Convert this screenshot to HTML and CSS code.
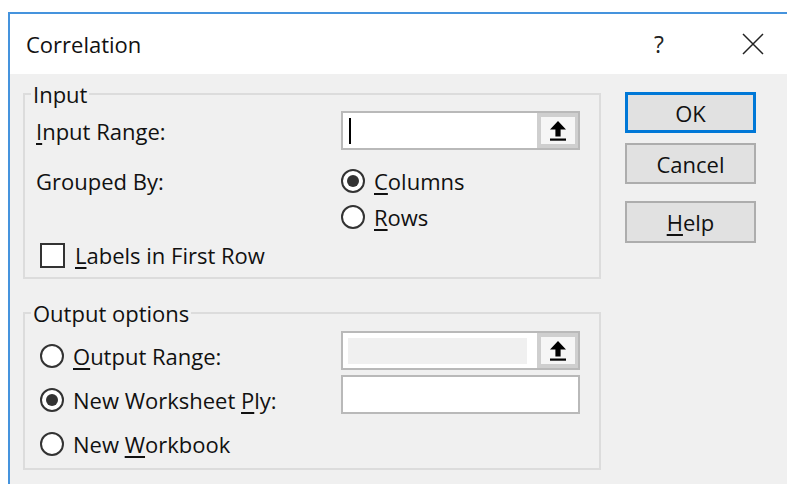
FILE: index.html
```html
<!DOCTYPE html>
<html lang="en">
<head>
<meta charset="utf-8">
<title>Correlation</title>
<link rel="stylesheet" href="styles.css">
</head>
<body>
<div class="window">
  <div class="titlebar">
    <span class="title">Correlation</span>
    <span class="caption-btn help-btn">?</span>
    <span class="caption-btn close-btn">
      <svg width="22" height="22" viewBox="0 0 22 22" aria-hidden="true">
        <path d="M1 1 L21 21 M21 1 L1 21" stroke="#222" stroke-width="1.5" fill="none"/>
      </svg>
    </span>
  </div>

  <div class="dialog-body">
    <div class="groups">
      <div class="group group-input">
        <span class="group-title">Input</span>

        <div class="row row-field">
          <span class="field-label"><u>I</u>nput Range:</span>
          <div class="range-box">
            <div class="range-text"><span class="caret"></span></div>
            <span class="range-btn">
              <svg width="18" height="22" viewBox="0 0 18 22" aria-hidden="true">
                <path d="M9 1 L17 9.5 L11.6 9.5 L11.6 16.5 L6.4 16.5 L6.4 9.5 L1 9.5 Z" fill="#000"/>
                <rect x="1" y="18.5" width="16" height="2.2" fill="#000"/>
              </svg>
            </span>
          </div>
        </div>

        <div class="row row-option first-option">
          <span class="field-label">Grouped By:</span>
          <label class="radio checked"><span class="circle"></span><span><u>C</u>olumns</span></label>
        </div>

        <div class="row row-option second-option">
          <span class="field-label"></span>
          <label class="radio"><span class="circle"></span><span><u>R</u>ows</span></label>
        </div>

        <div class="row row-option check-option">
          <label class="check"><span class="box"></span><span><u>L</u>abels in First Row</span></label>
        </div>
      </div>

      <div class="group group-output">
        <span class="group-title">Output options</span>

        <div class="row out-row">
          <label class="radio out-radio"><span class="circle"></span><span><u>O</u>utput Range:</span></label>
          <div class="range-box">
            <div class="range-text disabled"><span class="disabled-fill"></span></div>
            <span class="range-btn">
              <svg width="18" height="22" viewBox="0 0 18 22" aria-hidden="true">
                <path d="M9 1 L17 9.5 L11.6 9.5 L11.6 16.5 L6.4 16.5 L6.4 9.5 L1 9.5 Z" fill="#000"/>
                <rect x="1" y="18.5" width="16" height="2.2" fill="#000"/>
              </svg>
            </span>
          </div>
        </div>

        <div class="row out-row">
          <label class="radio out-radio checked"><span class="circle"></span><span>New Worksheet <u>P</u>ly:</span></label>
          <div class="text-box"></div>
        </div>

        <div class="row out-row">
          <label class="radio out-radio"><span class="circle"></span><span>New <u>W</u>orkbook</span></label>
        </div>
      </div>
    </div>

    <div class="buttons">
      <span class="btn btn-default">OK</span>
      <span class="btn btn-cancel">Cancel</span>
      <span class="btn btn-help"><span><u>H</u>elp</span></span>
    </div>
  </div>
</div>
</body>
</html>
```

FILE: styles.css
```css
html, body {
  margin: 0;
  padding: 0;
  background: #ffffff;
  overflow: hidden;
}

body {
  font-family: "Open Sans", "Noto Sans", sans-serif;
  font-size: 22px;
  line-height: 30px;
  color: #111;
}

u {
  text-decoration-thickness: 2px;
  text-underline-offset: 3px;
}

/* window frame */
.window {
  margin: 12px 0 0 8px;
  width: 789px;
  height: 472px;
  border-top: 2px solid #4593dd;
  border-left: 2px solid #4593dd;
  background: #f0f0f0;
  display: flex;
  flex-direction: column;
}

.titlebar {
  height: 60px;
  background: #ffffff;
  display: flex;
  align-items: center;
  flex-shrink: 0;
}

.title {
  flex: 1;
  padding-left: 16px;
}

.caption-btn {
  width: 92px;
  height: 60px;
  display: flex;
  align-items: center;
  justify-content: center;
}

.help-btn {
  font-size: 23px;
  color: #222;
  padding-right: 4px;
  box-sizing: border-box;
}

.close-btn svg {
  display: block;
}

/* dialog contents */
.dialog-body {
  display: flex;
  padding: 19px 0 0 13px;
}

.groups {
  width: 578px;
  display: flex;
  flex-direction: column;
  gap: 33px;
}

.group {
  position: relative;
  border: 2px solid #dcdcdc;
}

.group-title {
  position: absolute;
  top: -16px;
  left: 6px;
  padding: 0 2px;
  background: #f0f0f0;
  white-space: nowrap;
}

.group-input {
  padding: 16px 0 0 11px;
  height: 166px;
}

.group-output {
  height: 137px;
  padding: 17px 0 0 15px;
}

.row {
  display: flex;
  align-items: center;
}

.field-label {
  width: 305px;
  flex-shrink: 0;
  white-space: nowrap;
}

.row-field {
  height: 39px;
}

.row-option {
  height: 30px;
}

.first-option { margin-top: 16px; }
.second-option { margin-top: 6px; }
.check-option { margin-top: 8px; }

/* range reference box */
.range-box {
  width: 239px;
  height: 39px;
  box-sizing: border-box;
  border: 2px solid #b9b9b9;
  background: #ffffff;
  display: flex;
}

.range-text {
  flex: 1;
  display: flex;
  align-items: center;
  padding-left: 6px;
}

.caret {
  width: 2px;
  height: 26px;
  background: #000;
}

.range-text.disabled {
  padding: 5px 10px 4px 5px;
  align-items: stretch;
}

.disabled-fill {
  flex: 1;
  background: #f0f0f0;
}

.range-btn {
  width: 41px;
  box-sizing: border-box;
  border: 4px solid #cfcfcf;
  border-right-width: 3px;
  background: #f6f6f6;
  display: flex;
  align-items: center;
  justify-content: center;
}

.range-btn svg {
  display: block;
}

.text-box {
  width: 239px;
  height: 39px;
  box-sizing: border-box;
  border: 2px solid #b9b9b9;
  background: #ffffff;
}

/* radio buttons and check box */
.radio,
.check {
  display: inline-flex;
  align-items: center;
  gap: 9px;
  white-space: nowrap;
}

.circle {
  width: 24px;
  height: 24px;
  box-sizing: border-box;
  border: 2px solid #333;
  border-radius: 50%;
  background: #fff;
  display: flex;
  align-items: center;
  justify-content: center;
}

.radio.checked .circle::after {
  content: "";
  width: 12px;
  height: 12px;
  border-radius: 50%;
  background: #333;
}

.check {
  margin-left: 4px;
  gap: 10px;
}

.box {
  width: 25px;
  height: 25px;
  box-sizing: border-box;
  border: 2px solid #333;
  background: #fff;
}

.out-row {
  height: 39px;
  align-items: flex-start;
}

.out-row + .out-row {
  margin-top: 5px;
}

.out-radio {
  width: 301px;
  margin-top: 10px;
}

/* command buttons */
.buttons {
  margin-left: 24px;
  margin-top: -1px;
  width: 131px;
  display: flex;
  flex-direction: column;
}

.btn {
  height: 41px;
  box-sizing: border-box;
  border: 2px solid #adadad;
  background: #e1e1e1;
  display: flex;
  align-items: center;
  justify-content: center;
}

.btn-default {
  border: 3px solid #0078d7;
}

.btn-cancel {
  margin-top: 10px;
}

.btn-help {
  margin-top: 17px;
  height: 42px;
}
```
